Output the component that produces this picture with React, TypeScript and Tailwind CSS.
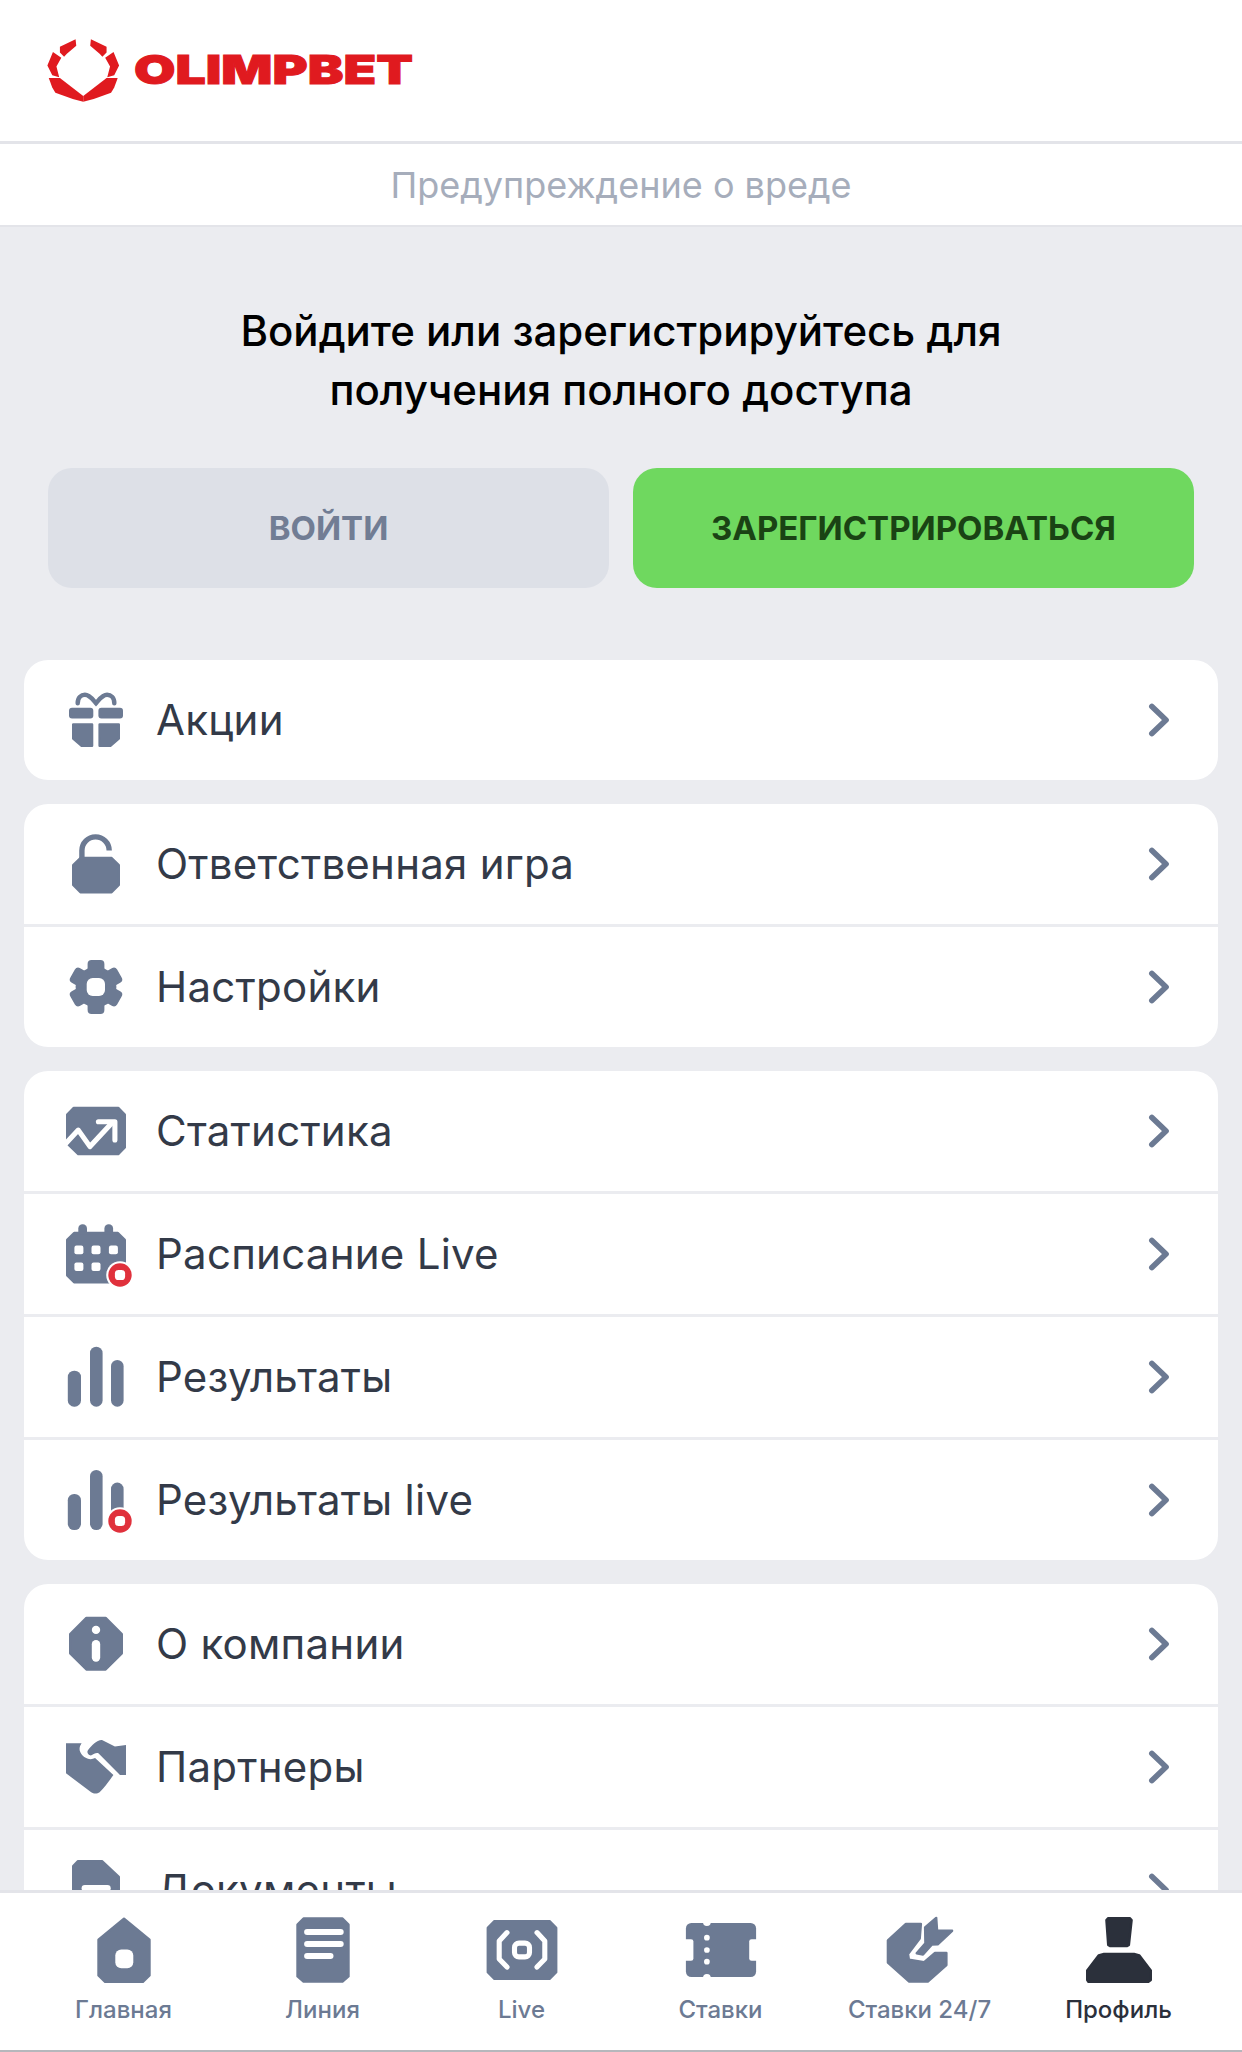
import type { ReactNode } from 'react';

const SLATE = '#6c7a93';
const DARK = '#2b303b';

function Icon({ children, className = '' }: { children: ReactNode; className?: string }) {
  return (
    <svg viewBox="0 0 24 24" className={`w-[72px] h-[72px] shrink-0 overflow-visible ${className}`}>
      {children}
    </svg>
  );
}

// filled shape with softened corners
function Soft({ d, color = SLATE, r = 0.8 }: { d: string; color?: string; r?: number }) {
  return <path d={d} fill={color} stroke={color} strokeWidth={r} strokeLinejoin="round" />;
}

function LiveBadge() {
  return (
    <g>
      <circle cx="20" cy="19" r="4.6" fill="#fff" />
      <circle cx="20" cy="19" r="3.9" fill="#e0313c" />
      <rect x="18.3" y="17.3" width="3.4" height="3.4" rx="1.2" fill="#fff" />
    </g>
  );
}

const GiftIcon = () => (
  <Icon>
    <path d="M5.9 6.4c0-2 1.2-2.8 2.4-2.8 1.6 0 2.6 1.6 3.7 2.8 1.1-1.2 2.1-2.8 3.7-2.8 1.2 0 2.4.8 2.4 2.8" fill="none" stroke={SLATE} strokeWidth="1.5" strokeLinecap="round" />
    <rect x="3" y="7.9" width="8.1" height="3.6" rx="1" fill={SLATE} />
    <rect x="12.8" y="7.9" width="8.2" height="3.6" rx="1" fill={SLATE} />
    <Soft d="M4.4 13.5h6.3v7.1H7.2l-2.8-2.4z" />
    <Soft d="M13.2 13.5h6.4v4.7l-2.8 2.4h-3.6z" />
  </Icon>
);

const LockIcon = () => (
  <Icon>
    <path d="M7.3 10V7.5a4.55 4.55 0 0 1 9.1 0" fill="none" stroke={SLATE} strokeWidth="1.8" />
    <Soft d="M6.8 10h10.4l2.4 2.4v6.6l-2.4 2.4H6.800L4.400 19v-6.600z" />
  </Icon>
);

const GearIcon = () => (
  <Icon>
    <circle cx="12" cy="12" r="6.800" fill={SLATE} />
    {[0, 60, 120, 180, 240, 300].map((a) => (
      <rect key={a} x="9.200" y="3" width="5.600" height="6" rx="1.300" fill={SLATE} transform={`rotate(${a} 12 12)`} />
    ))}
    <rect x="8.900" y="9" width="6.100" height="6" rx="2" fill="#fff" />
  </Icon>
);

const StatsIcon = () => (
  <Icon>
    <Soft d="M4.600 4.300h14.800l2.200 2.200v11l-2.200 2.200H6.100l-3.700-3.600V6.500z" />
    <path d="M1.600 16.500l4.500-4.800 3.900 5.500 7.200-7.800" fill="none" stroke="#fff" strokeWidth="1.700" strokeLinecap="round" strokeLinejoin="round" />
    <path d="M12.800 8.900h5.500V15" fill="none" stroke="#fff" strokeWidth="1.700" strokeLinecap="round" strokeLinejoin="round" />
  </Icon>
);

const CalendarIcon = () => (
  <Icon>
    <rect x="6.100" y="2.100" width="2.900" height="5" rx="1.400" fill={SLATE} />
    <rect x="14.800" y="2.100" width="2.900" height="5" rx="1.400" fill={SLATE} />
    <Soft d="M4.700 5h14.600l2.300 2.300v12l-2.100 2.100H4.700l-2.300-2.300V7.300z" />
    {[4.8, 10.5, 16.3].map((x) => (
      <rect key={x} x={x} y="9.200" width="3" height="2.900" rx="0.700" fill="#fff" />
    ))}
    {[4.8, 10.5].map((x) => (
      <rect key={x} x={x} y="14.800" width="3" height="2.900" rx="0.700" fill="#fff" />
    ))}
    <LiveBadge />
  </Icon>
);

const BarsIcon = () => (
  <Icon>
    <rect x="2.600" y="9.900" width="4.400" height="12" rx="2.100" fill={SLATE} />
    <rect x="10" y="1.900" width="4.200" height="20" rx="2.100" fill={SLATE} />
    <rect x="17" y="6.300" width="4.200" height="15.600" rx="2.100" fill={SLATE} />
  </Icon>
);

const BarsLiveIcon = () => (
  <Icon>
    <rect x="2.600" y="10" width="4.400" height="12" rx="2.100" fill={SLATE} />
    <rect x="10" y="2" width="4.200" height="20" rx="2.100" fill={SLATE} />
    <rect x="17" y="6.200" width="4.200" height="12" rx="2.100" fill={SLATE} />
    <LiveBadge />
  </Icon>
);

const InfoIcon = () => (
  <Icon>
    <Soft d="M8.800 3.300h6.400l5.400 5.400v6.400l-5.400 5.400H8.800l-5.400-5.400V8.700z" />
    <circle cx="12" cy="7.300" r="1.400" fill="#fff" />
    <rect x="10.600" y="10.700" width="2.800" height="7.200" rx="1.400" fill="#fff" />
  </Icon>
);

const HandshakeIcon = () => (
  <Icon>
    <path d="M2 4.100h5.200c-.7 1-.9 2-.4 3 .6 1.500 2.900 3 4.900 1.900l6.100 5.700c-1 1.400-2.700 3.800-4.600 5.700-.8.600-2 .6-2.800 0L2 14.100z" fill={SLATE} />
    <path d="M9.300 6.400c1.400-1.700 3-3.500 4.700-3.400l4.300 2.200 3.700-.5v10h-2l-7.200-7.300c-.8-.3-1.600.3-2.300.7-.6.300-1.800-.8-1.200-1.700z" fill={SLATE} />
  </Icon>
);

const DocIcon = () => (
  <Icon>
    <Soft d="M6 2.400h8l5.600 5.200v12.400l-2 2H6l-1.600-2V4z" />
    <rect x="7.200" y="10.300" width="9.700" height="2.200" rx="1.100" fill="#fff" />
    <rect x="7.200" y="15" width="9.700" height="2.200" rx="1.100" fill="#fff" />
  </Icon>
);

const HomeIcon = () => (
  <Icon>
    <Soft d="M12 1.600l8.500 7v11.900l-2.200 2.100H5.700l-2.200-2.100V8.600z" />
    <rect x="9.100" y="11.800" width="6" height="6.300" rx="2" fill="#fff" />
  </Icon>
);

const LineIcon = () => (
  <Icon>
    <Soft d="M5.500 1.500h13l2 2v17.300l-2 1.700h-13l-2-1.700V3.500z" />
    <path d="M6.700 6h11.200M6.700 10h11.200M6.700 14h7.800" stroke="#fff" strokeWidth="2" strokeLinecap="round" />
  </Icon>
);

const LiveIcon = () => (
  <Icon>
    <Soft d="M2.800 2.400h18.400l2.200 2.200v14.800l-2.200 2.200H2.800L.6 19.400V4.600z" />
    <path d="M7 6.200L4.400 9v6L7 17.700M17 6.200L19.600 9v6L17 17.700" fill="none" stroke="#fff" strokeWidth="1.700" strokeLinecap="round" strokeLinejoin="round" />
    <rect x="9.500" y="9.700" width="5" height="4.600" rx="1.500" fill="none" stroke="#fff" strokeWidth="1.700" />
  </Icon>
);

const TicketIcon = () => (
  <Icon>
    <rect x="0.300" y="3" width="23.400" height="18" rx="1.800" fill={SLATE} />
    <circle cx="7.300" cy="2.700" r="1.300" fill="#fff" />
    <circle cx="7.300" cy="21.300" r="1.300" fill="#fff" />
    <rect x="-1" y="8.400" width="3.800" height="7.200" rx="0.800" fill="#fff" />
    <rect x="21.400" y="8.400" width="3.800" height="7.200" rx="0.800" fill="#fff" />
    <circle cx="7.300" cy="7.900" r="0.950" fill="#fff" />
    <circle cx="7.300" cy="12" r="0.950" fill="#fff" />
    <circle cx="7.300" cy="15.900" r="0.950" fill="#fff" />
  </Icon>
);

const DartIcon = () => (
  <Icon>
    <Soft d="M7.300 3.300h5l-.4 4.900-3.900 5.100.3 1.900 5 .9 3.700-3.100h3.800V17l-6.200 5.500H8.400l-7.100-6.300V8.800z" />
    <Soft d="M10.900 13.100l2.900-3.300-.1-5.300 3.700-3.200.3 4.200 5 .1-4.800 4.500-2 .1-2.900 3.300z" />
  </Icon>
);

const ProfileIcon = () => (
  <Icon>
    <Soft d="M8.400 1.400h7.200l.6.600-.9 8.300-.6.400H9l-.6-.4L7.800 2z" color={DARK} />
    <Soft d="M7 13.300h10l1.800.500 3.800 5v3.200l-.8.600H1.800l-.4-.6v-3.200l3.800-5z" color={DARK} />
  </Icon>
);

function Chevron() {
  return (
    <svg viewBox="0 0 24 24" className="w-[72px] h-[72px] shrink-0">
      <path d="M9.300 7.500L14 12l-4.700 4.500" fill="none" stroke={SLATE} strokeWidth="1.900" strokeLinecap="round" strokeLinejoin="round" />
    </svg>
  );
}

function Logo() {
  const piece = (
    <g fill="#e01a1f">
      <polygon points="88,68 133,47 135,65 108,88 100,97 88,85" />
      <polygon points="68,83 92,100 78,125 86,156 66,150 52,122" />
      <polygon points="56,158 88,158 155,210 155,226 125,218 75,200 66,185" />
    </g>
  );
  return (
    <div className="flex items-center h-[141px] pl-[29px]">
      <svg viewBox="0 0 300 270" className="w-[105px] h-[94px] shrink-0 mt-[-2px]">
        {piece}
        <g transform="translate(310 0) scale(-1 1)">{piece}</g>
      </svg>
      <svg viewBox="0 0 290 60" className="w-[290px] h-[60px] ml-[-1px] mt-[-2px]">
        <text x="1" y="44" textLength="279" lengthAdjust="spacingAndGlyphs" fontFamily="Inter, sans-serif" fontWeight="900" fontSize="40" fill="#e01a1f" stroke="#e01a1f" strokeWidth="1">
          OLIMPBET
        </text>
      </svg>
    </div>
  );
}

function MenuRow({ icon, label }: { icon: ReactNode; label: string }) {
  return (
    <div className="border-t-[3px] border-[#ebecf0] first:border-t-0">
      <div className="h-[120px] flex items-center pl-[36px] pr-[22px] gap-[24px]">
        {icon}
        <span className="flex-1 text-[42px] leading-[48px] tracking-[0.25px] text-[#333a48]">{label}</span>
        <Chevron />
      </div>
    </div>
  );
}

function MenuCard({ children }: { children: ReactNode }) {
  return <div className="bg-white rounded-[24px] overflow-hidden shrink-0">{children}</div>;
}

function NavItem({ icon, label, active }: { icon: ReactNode; label: string; active?: boolean }) {
  return (
    <div className="flex flex-col items-center">
      {icon}
      <span className={`mt-[8px] text-[24px] leading-[32px] font-medium ${active ? 'text-[#2b303b]' : 'text-[#6c7a93]'}`}>
        {label}
      </span>
    </div>
  );
}

export default function App() {
  return (
    <div className="w-[1242px] h-[2052px] flex flex-col overflow-hidden bg-[#ebecf0] font-['Inter',sans-serif]">
      {/* Header */}
      <header className="shrink-0 bg-white border-b-[3px] border-[#e3e4e9] h-[144px]">
        <Logo />
      </header>
      <div className="shrink-0 h-[83px] bg-white border-b-[2px] border-[#e3e4e9] flex items-center justify-center text-[36px] text-[#a6adbb]">
        Предупреждение о вреде
      </div>

      <main className="flex-1 min-h-0 overflow-hidden">
        <h1 className="pt-[74px] text-center text-[42px] leading-[59px] font-medium text-black">
          Войдите или зарегистрируйтесь для
          <br />
          получения полного доступа
        </h1>
        <div className="mt-[49px] px-[48px] grid grid-cols-2 gap-[24px]">
          <button className="h-[120px] rounded-[24px] pt-[2px] bg-[#dde0e7] text-[33px] font-bold text-[#717d94]">ВОЙТИ</button>
          <button className="h-[120px] rounded-[24px] pt-[2px] bg-[#6fd85f] text-[33px] font-bold text-[#1a4314]">ЗАРЕГИСТРИРОВАТЬСЯ</button>
        </div>

        <div className="mt-[72px] mx-[24px] flex flex-col gap-[24px]">
          <MenuCard>
            <MenuRow icon={<GiftIcon />} label="Акции" />
          </MenuCard>
          <MenuCard>
            <MenuRow icon={<LockIcon />} label="Ответственная игра" />
            <MenuRow icon={<GearIcon />} label="Настройки" />
          </MenuCard>
          <MenuCard>
            <MenuRow icon={<StatsIcon />} label="Статистика" />
            <MenuRow icon={<CalendarIcon />} label="Расписание Live" />
            <MenuRow icon={<BarsIcon />} label="Результаты" />
            <MenuRow icon={<BarsLiveIcon />} label="Результаты live" />
          </MenuCard>
          <MenuCard>
            <MenuRow icon={<InfoIcon />} label="О компании" />
            <MenuRow icon={<HandshakeIcon />} label="Партнеры" />
            <MenuRow icon={<DocIcon />} label="Документы" />
          </MenuCard>
        </div>
      </main>

      {/* Bottom nav */}
      <nav className="shrink-0 h-[162px] bg-white border-t-[3px] border-b-[2px] border-t-[#e3e4e9] border-b-[#b5b7bc] px-[24px] pt-[21px] grid grid-cols-6">
        <NavItem icon={<HomeIcon />} label="Главная" />
        <NavItem icon={<LineIcon />} label="Линия" />
        <NavItem icon={<LiveIcon />} label="Live" />
        <NavItem icon={<TicketIcon />} label="Ставки" />
        <NavItem icon={<DartIcon />} label="Ставки 24/7" />
        <NavItem icon={<ProfileIcon />} label="Профиль" active />
      </nav>
    </div>
  );
}
